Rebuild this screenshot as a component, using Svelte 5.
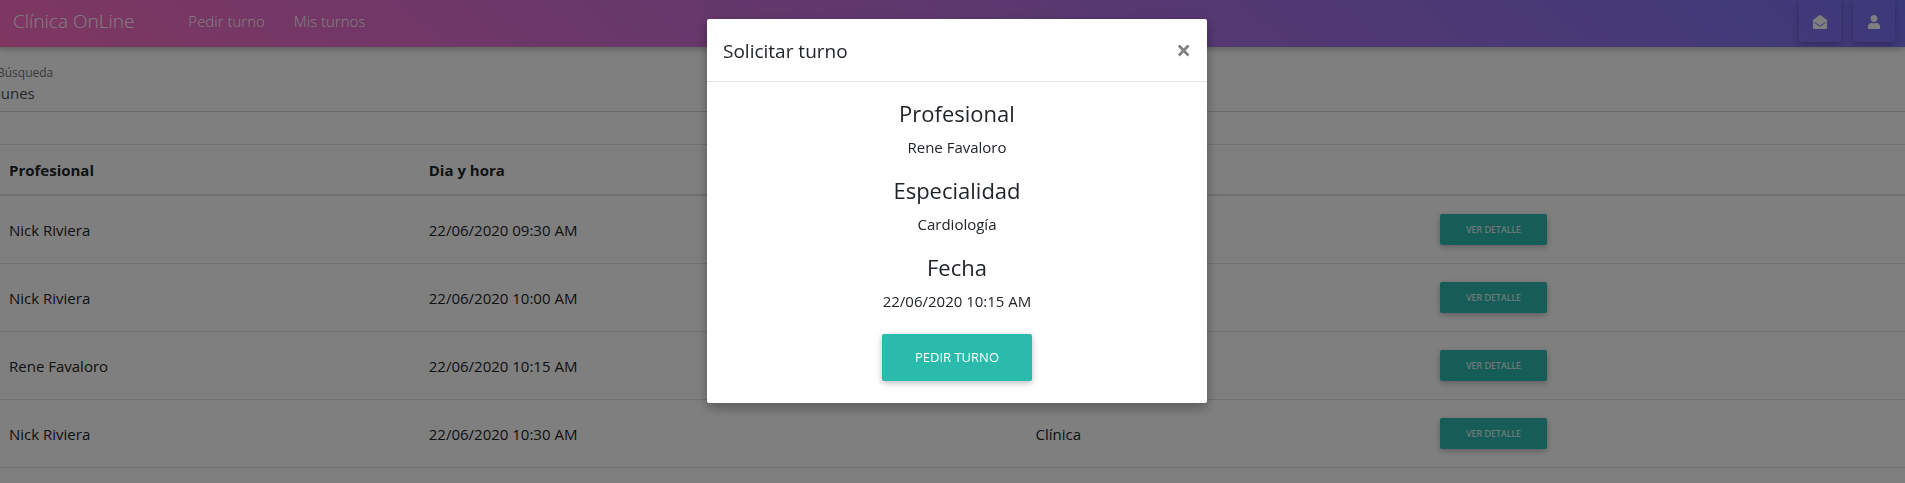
<script>
  let open = $state(true);
  let search = $state('lunes');

  const turnos = [
    { profesional: 'Nick Riviera', fecha: '22/06/2020 09:30 AM', especialidad: 'Clínica' },
    { profesional: 'Nick Riviera', fecha: '22/06/2020 10:00 AM', especialidad: 'Clínica' },
    { profesional: 'Rene Favaloro', fecha: '22/06/2020 10:15 AM', especialidad: 'Cardiología' },
    { profesional: 'Nick Riviera', fecha: '22/06/2020 10:30 AM', especialidad: 'Clínica' }
  ];

  let turno = $state(turnos[2]);

  function verDetalle(t) {
    turno = t;
    open = true;
  }
</script>

<div class="page">
  <nav class="navbar">
    <a class="brand" href="#inicio">Clínica OnLine</a>
    <a class="link" href="#pedir">Pedir turno</a>
    <a class="link" href="#turnos">Mis turnos</a>
    <div class="actions">
      <button class="icon-btn" aria-label="Mensajes">
        <svg width="14" height="14" viewBox="0 0 512 512" fill="currentColor" aria-hidden="true"><path d="M512 464c0 26.51-21.49 48-48 48H48c-26.51 0-48-21.49-48-48V200.724a48 48 0 0 1 18.387-37.776c24.913-19.529 45.501-35.365 164.2-121.511C199.412 29.17 232.797-.347 256 .003c23.198-.354 56.596 29.172 73.413 41.433 118.687 86.137 139.303 101.995 164.2 121.512A48 48 0 0 1 512 200.724V464zm-65.666-196.605c-2.563-3.728-7.7-4.595-11.339-1.907-22.845 16.873-55.462 40.705-105.582 77.079-16.825 12.266-50.21 41.781-73.413 41.43-23.211.344-56.559-29.143-73.413-41.43-50.114-36.37-82.734-60.204-105.582-77.079-3.639-2.688-8.776-1.821-11.339 1.907l-9.072 13.196a7.998 7.998 0 0 0 1.839 10.967c22.887 16.899 55.454 40.69 105.303 76.868 20.274 14.781 56.524 47.813 92.264 47.573 35.724.242 71.961-32.771 92.263-47.573 49.85-36.179 82.418-59.97 105.303-76.868a7.998 7.998 0 0 0 1.839-10.967l-9.071-13.196z" /></svg>
      </button>
      <button class="icon-btn" aria-label="Usuario">
        <svg width="14" height="14" viewBox="0 0 448 512" fill="currentColor" aria-hidden="true"><path d="M224 256c70.7 0 128-57.3 128-128S294.7 0 224 0 96 57.3 96 128s57.3 128 128 128zm89.6 32h-16.7c-22.2 10.2-46.9 16-72.9 16s-50.6-5.8-72.9-16h-16.7C60.2 288 0 348.2 0 422.4V464c0 26.5 21.5 48 48 48h352c26.5 0 48-21.5 48-48v-41.6c0-74.2-60.2-134.4-134.4-134.4z" /></svg>
      </button>
    </div>
  </nav>

  <div class="field">
    <label for="busqueda">Búsqueda</label>
    <input id="busqueda" type="text" bind:value={search} />
  </div>

  <table>
    <colgroup>
      <col class="c-prof" />
      <col class="c-date" />
      <col class="c-esp" />
      <col />
    </colgroup>
    <thead>
      <tr>
        <th scope="col">Profesional</th>
        <th scope="col">Dia y hora</th>
        <th scope="col">Especialidad</th>
        <th></th>
      </tr>
    </thead>
    <tbody>
      {#each turnos as t}
        <tr>
          <td>{t.profesional}</td>
          <td>{t.fecha}</td>
          <td>{t.especialidad}</td>
          <td><button class="btn btn-sm" onclick={() => verDetalle(t)}>Ver detalle</button></td>
        </tr>
      {/each}
    </tbody>
  </table>
</div>

{#if open}
  <div class="backdrop">
    <div class="modal" role="dialog" aria-modal="true" aria-labelledby="modal-title">
      <header>
        <h4 id="modal-title">Solicitar turno</h4>
        <button class="close" aria-label="Cerrar" onclick={() => (open = false)}>×</button>
      </header>
      <div class="body">
        <h3>Profesional</h3>
        <p>{turno.profesional}</p>
        <h3>Especialidad</h3>
        <p>{turno.especialidad}</p>
        <h3>Fecha</h3>
        <p>{turno.fecha}</p>
        <button class="btn btn-lg" onclick={() => (open = false)}>Pedir turno</button>
      </div>
    </div>
  </div>
{/if}

<style>
  :global(body) {
    margin: 0;
    background: #fff;
    color: #212529;
    font: 15px/24px 'Segoe UI', 'Open Sans', 'Noto Sans', sans-serif;
  }

  button,
  input {
    font-family: inherit;
  }

  .page {
    margin-left: -3px;
  }

  .navbar {
    display: flex;
    align-items: center;
    box-sizing: border-box;
    height: 47px;
    padding: 0 10px 6px 16px;
    background: linear-gradient(40deg, #ff6ec4, #7873f5);
    box-shadow: 0 2px 5px rgba(0, 0, 0, 0.16), 0 2px 10px rgba(0, 0, 0, 0.12);
  }

  .navbar a {
    color: #fff;
    font-weight: 300;
    text-decoration: none;
  }

  .navbar .brand {
    margin-right: 54px;
    font-size: 19px;
  }

  .link {
    margin-right: 29px;
  }

  .actions {
    display: flex;
    align-self: flex-start;
    gap: 12px;
    margin-left: auto;
  }

  .icon-btn {
    display: grid;
    place-items: center;
    width: 42px;
    height: 42px;
    padding: 2px 0 0;
    border: 0;
    border-radius: 0 0 2px 2px;
    background: transparent;
    color: #fff;
    box-shadow: 0 2px 5px rgba(0, 0, 0, 0.16), 0 2px 10px rgba(0, 0, 0, 0.12);
  }

  .field {
    display: flex;
    flex-direction: column;
    margin-bottom: 32px;
    padding-top: 18px;
    border-bottom: 1px solid #d4d4d4;
  }

  .field label {
    color: #757575;
    font-size: 12px;
    line-height: 16px;
  }

  .field input {
    padding: 2px 0 8px;
    border: 0;
    outline: 0;
    background: transparent;
    color: #495057;
    font-size: 15px;
    line-height: 20px;
  }

  table {
    width: 100%;
    table-layout: fixed;
    border-collapse: separate;
    border-spacing: 0;
    border-top: 1px solid #dee2e6;
  }

  .c-prof {
    width: 22%;
  }

  .c-date {
    width: 31.8%;
  }

  .c-esp {
    width: 20.9%;
  }

  th,
  td {
    box-sizing: border-box;
    height: 68px;
    padding: 0 12px;
    border-bottom: 1px solid #dee2e6;
    text-align: left;
    vertical-align: middle;
  }

  th {
    height: 51px;
    padding-top: 1px;
    border-bottom-width: 2px;
    font-weight: 700;
  }

  .btn {
    border: 0;
    border-radius: 2px;
    background: #2bbbad;
    color: #fff;
    text-transform: uppercase;
    box-shadow: 0 2px 5px rgba(0, 0, 0, 0.16), 0 2px 10px rgba(0, 0, 0, 0.12);
  }

  .btn-sm {
    display: block;
    margin: 0 6px;
    padding: 8px 26px;
    font-size: 9px;
    line-height: 15px;
  }

  .btn-lg {
    margin: 5px 6px 6px;
    padding: 14px 33px;
    font-size: 13px;
    line-height: 19px;
  }

  .backdrop {
    position: fixed;
    inset: 0 -12px 0 -3px;
    padding-top: 19px;
    background: rgba(0, 0, 0, 0.5);
  }

  .modal {
    max-width: 500px;
    margin: 0 auto;
    border-radius: 2px;
    background: #fff;
    box-shadow: 0 5px 11px rgba(0, 0, 0, 0.18), 0 4px 15px rgba(0, 0, 0, 0.15);
  }

  .modal header {
    display: flex;
    align-items: flex-start;
    justify-content: space-between;
    padding: 17px 16px 15px;
    border-bottom: 1px solid #dee2e6;
  }

  .modal h4 {
    margin: 0;
    font-size: 19px;
    font-weight: 400;
    line-height: 30px;
  }

  .close {
    padding: 0;
    border: 0;
    background: transparent;
    color: #808080;
    font-size: 26px;
    font-weight: 700;
    line-height: 28px;
  }

  .body {
    padding: 16px;
    text-align: center;
  }

  .body h3 {
    margin: 0 0 7px;
    font-size: 22px;
    font-weight: 400;
    line-height: 30px;
  }

  .body p {
    margin: 0 0 16px;
  }
</style>
